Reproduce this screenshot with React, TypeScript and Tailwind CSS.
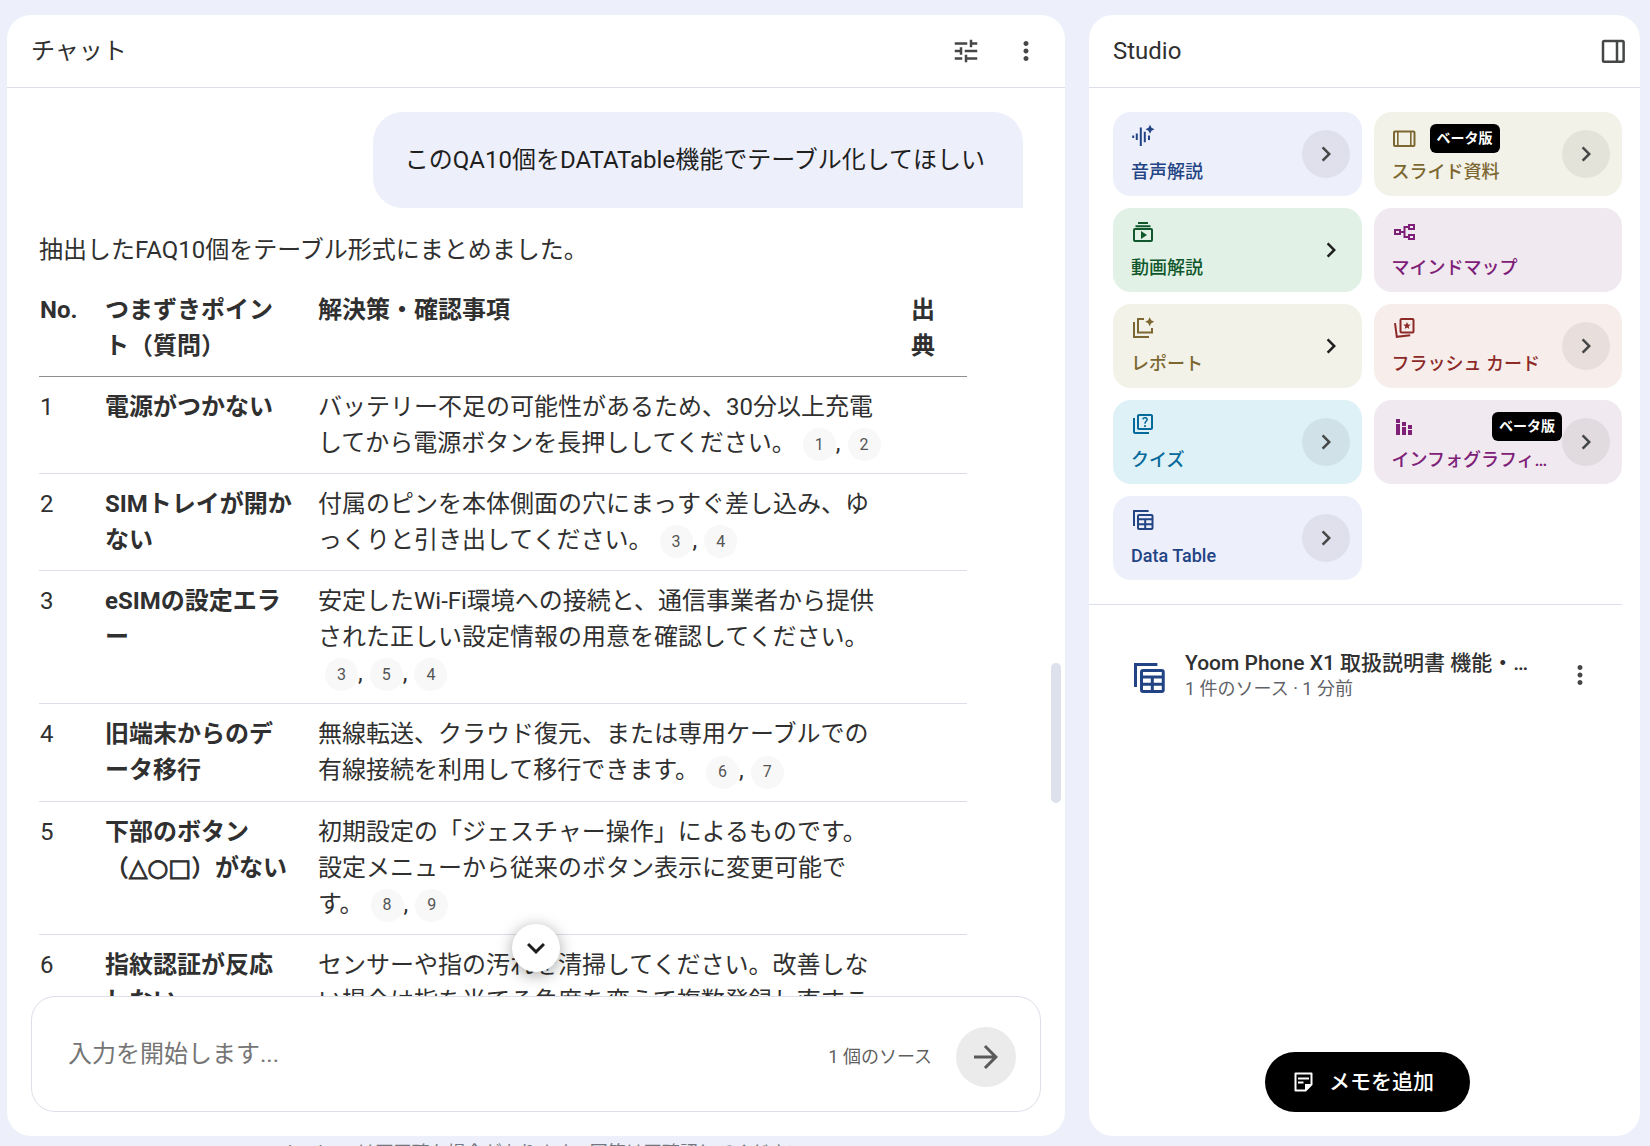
import { Fragment, type ReactNode } from "react";
import {
  MdArrowForward,
  MdChevronRight,
  MdKeyboardArrowDown,
  MdMoreVert,
  MdOutlineQuiz,
  MdStackedBarChart,
  MdTune,
} from "react-icons/md";

type IconProps = { className?: string; children?: ReactNode };

function Icon({ className = "size-6", children }: IconProps) {
  return (
    <svg
      viewBox="0 0 24 24"
      fill="none"
      stroke="currentColor"
      strokeWidth="2"
      aria-hidden="true"
      className={className}
    >
      {children}
    </svg>
  );
}

function AudioIcon() {
  return (
    <Icon>
      <path d="M2.2 11.5v2.4M5.8 9.5v6.4M9.8 3.5v18.5M13.8 7.8v10.4M18 11.5v4.4" />
      <path
        d="M19 .8l1.5 3 3 1.5-3 1.5-1.5 3-1.5-3-3-1.5 3-1.5z"
        fill="currentColor"
        stroke="none"
      />
    </Icon>
  );
}

function SlidesIcon() {
  return (
    <Icon>
      <rect x="2" y="4.5" width="20.5" height="14.5" rx="1" />
      <path d="M5.8 5v14M18.8 5v14" strokeWidth="1.6" />
    </Icon>
  );
}

function VideoIcon() {
  return (
    <Icon>
      <path d="M7 3h10M4.5 6.2h15" />
      <rect x="3" y="9" width="18" height="12" rx="1" />
      <path d="M10 11v8l6-4z" fill="currentColor" stroke="none" />
    </Icon>
  );
}

function MindMapIcon() {
  return (
    <Icon>
      <rect x="3" y="10" width="5" height="4" />
      <rect x="17" y="5" width="5" height="4" />
      <rect x="17" y="15" width="5" height="4" />
      <path d="M8 12h4.5M17 7h-4.5v10H17" />
    </Icon>
  );
}

function ReportIcon() {
  return (
    <Icon>
      <path d="M3 6v15h15" />
      <path d="M13 3H7v13.5h14V12" />
      <path
        d="M18.7 1.2l1.5 3 3 1.5-3 1.5-1.5 3-1.5-3-3-1.5 3-1.5z"
        fill="currentColor"
        stroke="none"
      />
    </Icon>
  );
}

function FlashcardIcon() {
  return (
    <Icon>
      <rect x="8.5" y="3" width="13" height="13.5" rx="1" />
      <path d="M3 7.2l1.8 13.6 13.4-1.5" />
      <path
        d="M15 5.9l1.1 2.5 2.6.2-2 1.8.6 2.6-2.3-1.4-2.3 1.4.6-2.6-2-1.8 2.6-.2z"
        fill="currentColor"
        stroke="none"
      />
    </Icon>
  );
}

function TableIcon({ className }: IconProps) {
  return (
    <Icon className={className}>
      <path d="M3 18V3h14.6" />
      <rect x="7" y="7" width="14.5" height="14" rx="1" />
      <path d="M7 11.3h14M7 16.2h14M14.2 11.5V21" />
    </Icon>
  );
}

function PanelIcon() {
  return (
    <Icon className="size-[30px]">
      <rect x="4" y="4" width="16.5" height="16.5" rx="1" />
      <path d="M15.2 4v16" />
    </Icon>
  );
}

function NoteIcon() {
  return (
    <Icon>
      <path d="M14.5 20.5H4.5v-17h16v11z" strokeLinejoin="round" />
      <path d="M14 14h7l-7 7z" fill="currentColor" stroke="none" />
      <path d="M7 8.5h11M7 12.5h5.5" />
    </Icon>
  );
}

const tools = [
  { label: "音声解説", icon: <AudioIcon />, color: "bg-[#edeffa] text-[#224484]", arrow: "round" },
  { label: "スライド資料", icon: <SlidesIcon />, color: "bg-[#f2f2e8] text-[#7d6730]", arrow: "round", beta: true },
  { label: "動画解説", icon: <VideoIcon />, color: "bg-[#e1f1e5] text-[#10572b]", arrow: "plain" },
  { label: "マインドマップ", icon: <MindMapIcon />, color: "bg-[#f0e9ef] text-[#7e2078]" },
  { label: "レポート", icon: <ReportIcon />, color: "bg-[#f2f2e8] text-[#7d6730]", arrow: "plain" },
  { label: "フラッシュ カード", icon: <FlashcardIcon />, color: "bg-[#f7edeb] text-[#8c2a28]", arrow: "round" },
  { label: "クイズ", icon: <MdOutlineQuiz className="size-6" />, color: "bg-[#def1f6] text-[#056a9b]", arrow: "round" },
  {
    label: "インフォグラフィック",
    icon: <MdStackedBarChart className="size-6" />,
    color: "bg-[#f0e9ef] text-[#7e2078]",
    arrow: "round",
    beta: true,
  },
  { label: "Data Table", icon: <TableIcon />, color: "bg-[#edeffa] text-[#224484]", arrow: "round" },
];

const rows: { question: ReactNode; answer: string; sources: number[] }[] = [
  {
    question: "電源がつかない",
    answer: "バッテリー不足の可能性があるため、30分以上充電してから電源ボタンを長押ししてください。",
    sources: [1, 2],
  },
  {
    question: "SIMトレイが開かない",
    answer: "付属のピンを本体側面の穴にまっすぐ差し込み、ゆっくりと引き出してください。",
    sources: [3, 4],
  },
  {
    question: "eSIMの設定エラー",
    answer: "安定したWi-Fi環境への接続と、通信事業者から提供された正しい設定情報の用意を確認してください。",
    sources: [3, 5, 4],
  },
  {
    question: "旧端末からのデータ移行",
    answer: "無線転送、クラウド復元、または専用ケーブルでの有線接続を利用して移行できます。",
    sources: [6, 7],
  },
  {
    question: (
      <>
        下部のボタン（
        <span className="font-['DejaVu_Sans'] [-webkit-text-stroke:1px]">△○□</span>）がない
      </>
    ),
    answer: "初期設定の「ジェスチャー操作」によるものです。設定メニューから従来のボタン表示に変更可能です。",
    sources: [8, 9],
  },
  {
    question: "指紋認証が反応しない",
    answer: "センサーや指の汚れを清掃してください。改善しない場合は指を当てる角度を変えて複数登録し直すことをお試しください。",
    sources: [10],
  },
];

function Sources({ ids }: { ids: number[] }) {
  return ids.map((id, i) => (
    <Fragment key={id}>
      {i > 0 && ","}
      <button
        type="button"
        className="ml-[7px] inline-flex size-[33px] items-center justify-center rounded-full bg-[#f8f8f8] align-middle text-base text-[#555]"
      >
        {id}
      </button>
    </Fragment>
  ));
}

function FaqTable() {
  return (
    <table className="mt-6 w-full table-fixed text-left">
      <colgroup>
        <col className="w-[66px]" />
        <col className="w-[213px]" />
        <col />
        <col className="w-14" />
      </colgroup>
      <thead>
        <tr className="border-b border-[#8e8e8e] align-top">
          <th className="pb-3 pl-px">No.</th>
          <th className="pr-6 pb-3">つまずきポイント（質問）</th>
          <th className="pr-6 pb-3">解決策・確認事項</th>
          <th className="pr-6 pb-3">出典</th>
        </tr>
      </thead>
      <tbody>
        {rows.map((row, i) => (
          <tr key={i} className="border-b border-[#dcdfea] align-top">
            <td className="py-3 pl-px">{i + 1}</td>
            <td className="py-3 pr-6 font-bold">{row.question}</td>
            <td className="py-3 pr-6">
              {row.answer}
              <Sources ids={row.sources} />
            </td>
            <td />
          </tr>
        ))}
      </tbody>
    </table>
  );
}

function ChatPanel() {
  return (
    <div className="flex min-w-0 flex-1 flex-col">
      <section className="flex min-h-0 flex-1 flex-col rounded-3xl bg-white pb-6">
        <header className="flex h-[73px] shrink-0 items-center border-b border-[#dcdfea] pr-6 pl-6">
          <h2 className="flex-1">チャット</h2>
          <div className="flex gap-[30px] text-[#444746]">
            <button type="button" aria-label="チャットを設定">
              <MdTune className="size-[30px]" />
            </button>
            <button type="button" aria-label="その他">
              <MdMoreVert className="size-[30px]" />
            </button>
          </div>
        </header>

        <div className="relative min-h-0 flex-1">
          <div className="h-full overflow-hidden pt-6">
            <div className="flex justify-end pr-[42px]">
              <p className="rounded-[30px] rounded-br-none bg-[#edeffa] py-[30px] pr-[38px] pl-8 text-[#1f1f1f]">
                このQA10個をDATATable機能でテーブル化してほしい
              </p>
            </div>
            <div className="mt-6 pr-[98px] pl-8">
              <p>抽出したFAQ10個をテーブル形式にまとめました。</p>
              <FaqTable />
            </div>
          </div>
          <div className="absolute top-[575px] right-1 h-[140px] w-2.5 rounded-full bg-[#dce1eb]" />
          <button
            type="button"
            aria-label="一番下へ"
            className="absolute bottom-6 left-1/2 flex size-12 -translate-x-1/2 items-center justify-center rounded-full bg-white text-[#1f1f1f] shadow-[0_3px_16px_rgba(0,0,0,0.35)]"
          >
            <MdKeyboardArrowDown className="size-9" />
          </button>
        </div>

        <form className="mx-6 flex h-[116px] shrink-0 items-center rounded-3xl border border-[#dcdfea] pt-1.5 pr-6 pl-9">
          <input
            type="text"
            aria-label="メッセージ"
            placeholder="入力を開始します..."
            className="min-w-0 flex-1 pb-1.5 outline-none placeholder:text-[#757575]"
          />
          <span className="text-lg text-[#5f5f5f]">1 個のソース</span>
          <button
            type="button"
            aria-label="送信"
            className="ml-6 flex size-[60px] items-center justify-center rounded-full bg-[#ebebeb] text-[#5a5a5a]"
          >
            <MdArrowForward className="size-9" />
          </button>
        </form>
      </section>
      <div className="h-2.5 shrink-0 pt-[5px] text-center text-lg leading-6 text-[#757780]">
        NotebookLM は不正確な場合があります。回答は再確認してください。
      </div>
    </div>
  );
}

function StudioPanel() {
  return (
    <aside className="mb-2.5 flex w-[551px] shrink-0 flex-col rounded-3xl bg-white">
      <header className="flex h-[73px] shrink-0 items-center border-b border-[#dcdfea] pr-3 pl-6">
        <h2 className="flex-1">Studio</h2>
        <button type="button" aria-label="パネルを閉じる" className="text-[#444746]">
          <PanelIcon />
        </button>
      </header>

      <div className="mr-[18px] flex-1">
        <div className="grid grid-cols-2 gap-3 border-b border-[#dcdfea] py-6 pl-6">
          {tools.map((tool) => (
            <button
              key={tool.label}
              type="button"
              className={`flex h-[84px] items-center justify-between rounded-[18px] pr-3 pl-[18px] text-left ${tool.color}`}
            >
              <span className="flex h-[60px] min-w-0 flex-col justify-between">
                <span className="flex items-center justify-between">
                  {tool.icon}
                  {tool.beta && (
                    <span className="rounded-md bg-black px-[7px] text-sm leading-[29px] font-bold text-white">
                      ベータ版
                    </span>
                  )}
                </span>
                <span className="truncate text-lg leading-6 font-medium">{tool.label}</span>
              </span>
              {tool.arrow === "round" && (
                <span className="flex size-12 shrink-0 items-center justify-center rounded-full bg-black/6 text-[#444746]">
                  <MdChevronRight className="size-[30px]" />
                </span>
              )}
              {tool.arrow === "plain" && (
                <MdChevronRight className="mr-1 size-[30px] shrink-0 text-[#1f1f1f]" />
              )}
            </button>
          ))}
        </div>

        <div className="flex items-center pt-11 pr-[27px] pl-[42px]">
          <TableIcon className="mt-1.5 size-9 shrink-0 text-[#224484]" />
          <div className="ml-[18px] min-w-0 flex-1">
            <p className="truncate text-[21px] leading-7 font-medium">Yoom Phone X1 取扱説明書 機能・…</p>
            <p className="text-lg leading-6 text-[#5f6368]">1 件のソース · 1 分前</p>
          </div>
          <button type="button" aria-label="その他" className="text-[#444746]">
            <MdMoreVert className="size-[30px]" />
          </button>
        </div>
      </div>

      <button
        type="button"
        className="mb-6 ml-1.5 flex h-[60px] items-center gap-3.5 self-center rounded-full bg-black pr-9 pl-[26px] text-[21px] font-medium text-white"
      >
        <NoteIcon />
        メモを追加
      </button>
    </aside>
  );
}

export default function App() {
  return (
    <main
      lang="ja"
      className="flex h-screen gap-6 overflow-hidden bg-[#edeffa] pt-[15px] pr-2.5 pl-[7px] font-[Roboto,'Noto_Sans_CJK_JP',sans-serif] text-2xl leading-9 text-[#303030]"
    >
      <ChatPanel />
      <StudioPanel />
    </main>
  );
}
